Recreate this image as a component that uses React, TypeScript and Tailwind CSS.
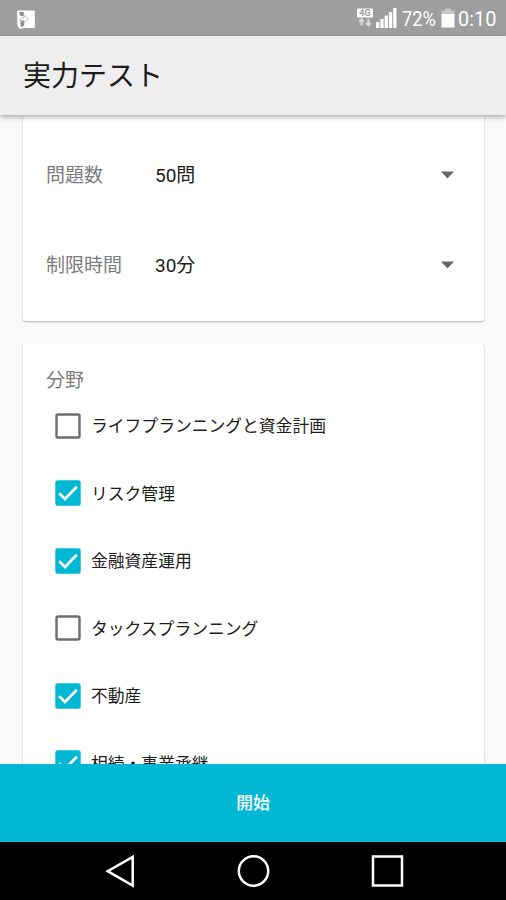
import React, { useState } from "react";

interface Field {
  id: string;
  label: string;
  checked: boolean;
}

const initialFields: Field[] = [
  { id: "life", label: "ライフプランニングと資金計画", checked: false },
  { id: "risk", label: "リスク管理", checked: true },
  { id: "finance", label: "金融資産運用", checked: true },
  { id: "tax", label: "タックスプランニング", checked: false },
  { id: "realestate", label: "不動産", checked: true },
  { id: "inheritance", label: "相続・事業承継", checked: true },
];

function StatusBar() {
  return (
    <div className="flex h-9 shrink-0 items-center bg-[#9e9e9e] pl-4 text-white">
      <svg width="20" height="22" viewBox="0 0 20 22" className="shrink-0">
        <path d="M1 3.500h17.800v17.500H8l-4.500 1L1.500 18z" fill="#fff" />
        <path d="M3 5h4.800v4.500L4 8.500zM4.200 14.500l4-1v5.200l-3.400 1.500z" fill="#8d8d8d" />
        <path d="M3.500 13.500c1-2.500 2.500-3 4.500-2.700V8.500l4.600 3.600-4.600 3.400v-2.200z" fill="#fff" stroke="#b0b0b0" strokeWidth="0.800" />
      </svg>
      <div className="ml-auto flex items-center">
        <svg width="16" height="20" viewBox="0 0 16 20">
          <rect x="0" y="0.5" width="16" height="9" rx="1" fill="#fff" />
          <text x="8" y="8.2" textAnchor="middle" fontSize="9" fontWeight="700" fontFamily="Roboto, sans-serif" fill="#9e9e9e">
            4G
          </text>
          <path d="M4.500 17.500v-6M2.200 13.800l2.300-2.600 2.300 2.600M11.500 11v6.500M9.200 15l2.300 2.600 2.300-2.600" fill="none" stroke="#dadada" strokeWidth="2" />
        </svg>
        <svg width="21" height="22" viewBox="0 0 21 22" className="ml-[3px]" fill="#fff">
          <rect x="0" y="15" width="3.300" height="6" />
          <rect x="4.300" y="12" width="3.300" height="9" />
          <rect x="8.600" y="8.500" width="3.300" height="12.500" />
          <rect x="12.900" y="5" width="3.300" height="16" />
          <rect x="17.200" y="1" width="3.300" height="20" />
        </svg>
        <span className="ml-[5px] w-[39px] origin-left scale-x-[0.87] pt-[2px] text-[21px] leading-none">72%</span>
        <svg width="14" height="20" viewBox="0 0 14 20" className="mr-[3px]">
          <path d="M4 0.500h6v2.200h3.500v4H0.500v-4H4z" fill="#c4c4c4" />
          <rect x="0.500" y="6" width="13" height="13.500" fill="#fff" />
        </svg>
        <span className="w-[48px] origin-left scale-x-[0.95] pt-[2px] text-[21px] leading-none">0:10</span>
      </div>
    </div>
  );
}

function SelectRow({ label, value }: { label: string; value: string }) {
  return (
    <div className="flex h-[90px] items-center pr-[30px] pl-[23px] text-[19px]">
      <span className="w-[109px] pt-[3px] text-[#7c7c7c]">{label}</span>
      <span className="flex-1 pt-[2px] text-[#1c1c1c]">{value}</span>
      <svg width="13" height="8" viewBox="0 0 13 8">
        <path d="M0 0.500h13L6.500 7.500z" fill="#676767" />
      </svg>
    </div>
  );
}

function CheckRow({ field, onToggle }: { field: Field; onToggle: () => void }) {
  return (
    <button type="button" onClick={onToggle} className="flex h-[67.500px] w-full items-center pl-8 text-left">
      <svg width="26" height="26" viewBox="0 0 26 26" className="mr-[10px] shrink-0">
        {field.checked ? (
          <>
            <rect x="0.300" y="0.300" width="25.400" height="25.400" rx="2.500" fill="#00b8d4" />
            <path d="M4.200 13.300l5.800 5.700L21.800 6.800" fill="none" stroke="#fff" strokeWidth="2.700" />
          </>
        ) : (
          <rect x="1.500" y="1.500" width="23" height="23" rx="1.500" fill="none" stroke="#6d6d6d" strokeWidth="2.400" />
        )}
      </svg>
      <span className="pt-[2px] text-[16.800px] whitespace-nowrap text-[#1c1c1c]">{field.label}</span>
    </button>
  );
}

export default function App() {
  const [fields, setFields] = useState(initialFields);

  const toggle = (id: string) => {
    setFields(fields.map((f) => (f.id === id ? { ...f, checked: !f.checked } : f)));
  };

  return (
    <div className="flex h-[900px] w-[506px] flex-col overflow-hidden bg-[#fafafa] font-[Roboto,'Noto_Sans_CJK_JP',sans-serif]">
      <StatusBar />
      <header className="relative z-10 flex h-[79px] shrink-0 items-center bg-[#eeeeee] pl-[23px] shadow-[0_2px_5px_rgba(0,0,0,0.35)]">
        <h1 className="pt-[3px] text-[28px] leading-none text-[#1c1c1c]">実力テスト</h1>
      </header>

      <main className="min-h-0 flex-1 overflow-hidden pr-[22px] pl-[23px]">
        <section className="h-[206px] rounded-b-[3px] bg-white pt-[15px] shadow-[0_1px_2px_rgba(0,0,0,0.3)]">
          <SelectRow label="問題数" value="50問" />
          <SelectRow label="制限時間" value="30分" />
        </section>

        <section className="mt-[23px] h-[480px] rounded-[3px] bg-white pt-[22px] shadow-[0_1px_2px_rgba(0,0,0,0.3)]">
          <h2 className="h-[26px] pl-[23px] text-[19px] leading-[30px] text-[#7c7c7c]">分野</h2>
          {fields.map((field) => (
            <CheckRow key={field.id} field={field} onToggle={() => toggle(field.id)} />
          ))}
        </section>
      </main>

      <button type="button" className="h-[78px] shrink-0 bg-[#00b8d4] pt-[2px] text-[16.800px] font-medium text-white">
        開始
      </button>

      <nav className="flex h-[58px] shrink-0 items-center justify-between bg-black pr-[101px] pl-[105px]">
        <svg width="30" height="34" viewBox="0 0 30 34">
          <path d="M27.700 2.800v28.800L2.700 17.200z" fill="none" stroke="#fff" strokeWidth="2.500" />
        </svg>
        <svg width="34" height="34" viewBox="0 0 34 34">
          <circle cx="17.500" cy="17" r="14.700" fill="none" stroke="#fff" strokeWidth="2.500" />
        </svg>
        <svg width="34" height="34" viewBox="0 0 34 34">
          <rect x="2" y="2.500" width="29" height="29" fill="none" stroke="#fff" strokeWidth="2.500" />
        </svg>
      </nav>
    </div>
  );
}
